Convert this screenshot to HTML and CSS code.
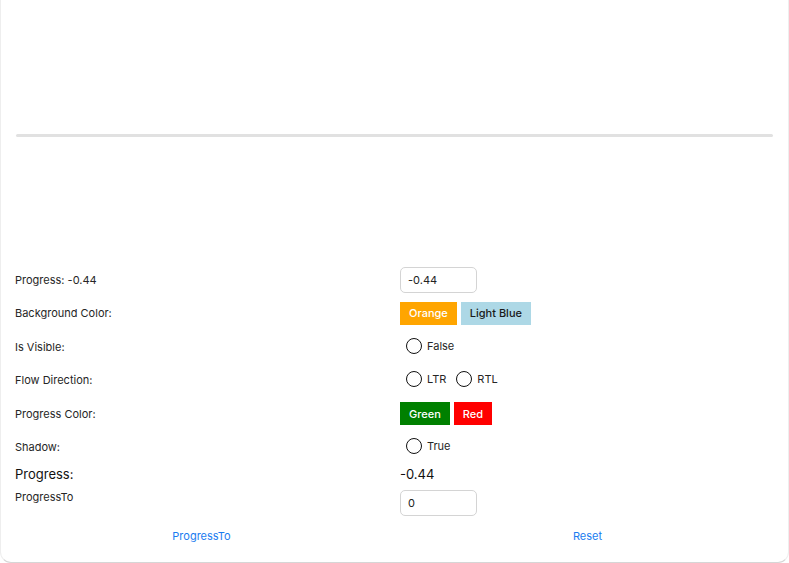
FILE: index.html
```html
<!DOCTYPE html>
<html>
<head>
<meta charset="utf-8">
<link rel="stylesheet" href="styles.css">
</head>
<body>
<div class="window">
  <div class="top">
    <div class="bar"><div class="fill"></div></div>
  </div>
  <div class="form">
    <div class="row">
      <div class="label">Progress: -0.44</div>
      <div class="ctrl"><div class="entry">-0.44</div></div>
    </div>
    <div class="row">
      <div class="label">Background Color:</div>
      <div class="ctrl">
        <span class="btn orange">Orange</span>
        <span class="btn lightblue">Light Blue</span>
      </div>
    </div>
    <div class="row">
      <div class="label">Is Visible:</div>
      <div class="ctrl"><span class="radio"><span class="circle"></span>False</span></div>
    </div>
    <div class="row">
      <div class="label">Flow Direction:</div>
      <div class="ctrl">
        <span class="radio"><span class="circle"></span>LTR</span>
        <span class="radio"><span class="circle"></span>RTL</span>
      </div>
    </div>
    <div class="row">
      <div class="label">Progress Color:</div>
      <div class="ctrl">
        <span class="btn green">Green</span>
        <span class="btn red">Red</span>
      </div>
    </div>
    <div class="row">
      <div class="label">Shadow:</div>
      <div class="ctrl"><span class="radio"><span class="circle"></span>True</span></div>
    </div>
    <div class="row big">
      <div class="label">Progress:</div>
      <div class="ctrl">-0.44</div>
    </div>
    <div class="row top-aligned">
      <div class="label">ProgressTo</div>
      <div class="ctrl"><div class="entry">0</div></div>
    </div>
  </div>
  <div class="actions">
    <span class="link">ProgressTo</span>
    <span class="link">Reset</span>
  </div>
</div>
</body>
</html>
```

FILE: styles.css
```css
html, body {
  margin: 0;
  padding: 0;
  background: #ffffff;
}
body {
  font-family: Inter, "Liberation Sans", sans-serif;
  font-size: 11px;
  color: #262626;
}
.window {
  height: 563px;
  border: 1px solid #eeeeee;
  border-top: none;
  border-bottom-color: #d6d6d6;
  border-radius: 0 0 11px 11px;
  box-sizing: border-box;
  display: flex;
  flex-direction: column;
}
.top {
  height: 263px;
  padding: 134px 15px 0 15px;
  box-sizing: border-box;
}
.bar {
  height: 3px;
  border-radius: 2px;
  background: #e1e1e1;
}
.form {
  display: flex;
  flex-direction: column;
  padding: 0 14px;
}
.row {
  display: grid;
  grid-template-columns: 385px 1fr;
  height: 33.5px;
  align-items: center;
}
.row.big {
  height: 26px;
  font-size: 13px;
  color: #111;
  align-items: start;
  padding-top: 2px;
  box-sizing: border-box;
}
.row.top-aligned {
  height: 27px;
  align-items: start;
}
.ctrl {
  display: flex;
  align-items: center;
  gap: 4px;
}
.entry {
  width: 77px;
  height: 26px;
  box-sizing: border-box;
  border: 1px solid #d4d4d4;
  border-radius: 5px;
  padding: 0 7px;
  display: flex;
  align-items: center;
  color: #222;
}
.btn {
  height: 23px;
  display: inline-flex;
  align-items: center;
  padding: 0 9px;
  font-weight: 500;
}
.orange { background: #ffa500; color: #fff; }
.lightblue { background: #add8e6; color: #1a1a1a; }
.green { background: #008000; color: #fff; }
.red { background: #ff0000; color: #fff; }
.radio {
  display: inline-flex;
  align-items: center;
  gap: 5px;
  margin-left: 6px;
  margin-top: -2px;
}
.circle {
  width: 16px;
  height: 16px;
  box-sizing: border-box;
  border: 1.5px solid #111;
  border-radius: 50%;
}
.actions {
  display: grid;
  grid-template-columns: 1fr 1fr;
  padding: 0 7.5px;
  margin-top: 9px;
  height: 20px;
  align-items: center;
  text-align: center;
}
.link {
  color: #1a7cf0;
}
```
